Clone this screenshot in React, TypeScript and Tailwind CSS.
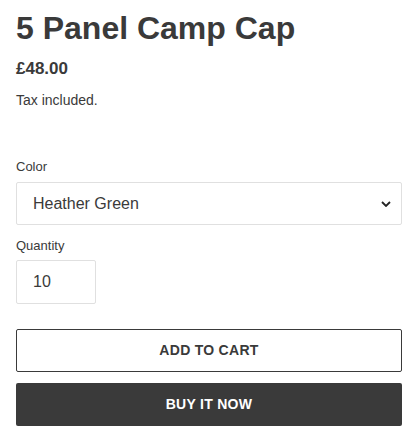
import React from "react";

export default function App() {
  return (
    <div
      className="w-[420px] h-[446px] bg-white px-4 text-[#3a3a3a]"
      style={{ fontFamily: '"Liberation Sans", Arial, sans-serif' }}
    >
      <h1 className="pt-[9px] text-[32px] leading-[38px] font-bold">5 Panel Camp Cap</h1>
      <div className="mt-[10px] text-[17px] leading-[24px] font-bold">£48.00</div>
      <div className="mt-[9px] text-[14px] leading-[20px]">Tax included.</div>

      <div className="mt-[48px] text-[13px] leading-[18px]">Color</div>
      <div className="mt-[6px] h-[43px] w-[386px] border border-[#e0e0e0] rounded-[2px] flex items-center justify-between pl-[16px] pr-[10px]">
        <span className="text-[16px]">Heather Green</span>
        <svg width="10" height="6" viewBox="0 0 10 6" className="mt-[1px]">
          <path d="M1 1 L5 5 L9 1" fill="none" stroke="#222" strokeWidth="1.8" />
        </svg>
      </div>

      <div className="mt-[12px] text-[13px] leading-[18px]">Quantity</div>
      <div className="mt-[5px] h-[44px] w-[80px] border border-[#e0e0e0] rounded-[2px] flex items-center pl-[16px]">
        <span className="text-[16px]">10</span>
      </div>

      <div className="mt-[25px] h-[43px] w-[386px] border border-[#3a3a3a] rounded-[2px] flex items-center justify-center text-[14px] font-bold tracking-[0.02em]">
        ADD TO CART
      </div>
      <div className="mt-[11px] h-[43px] w-[386px] bg-[#3a3a3a] rounded-[2px] flex items-center justify-center text-[14px] font-bold tracking-[0.02em] text-white">
        BUY IT NOW
      </div>
    </div>
  );
}
